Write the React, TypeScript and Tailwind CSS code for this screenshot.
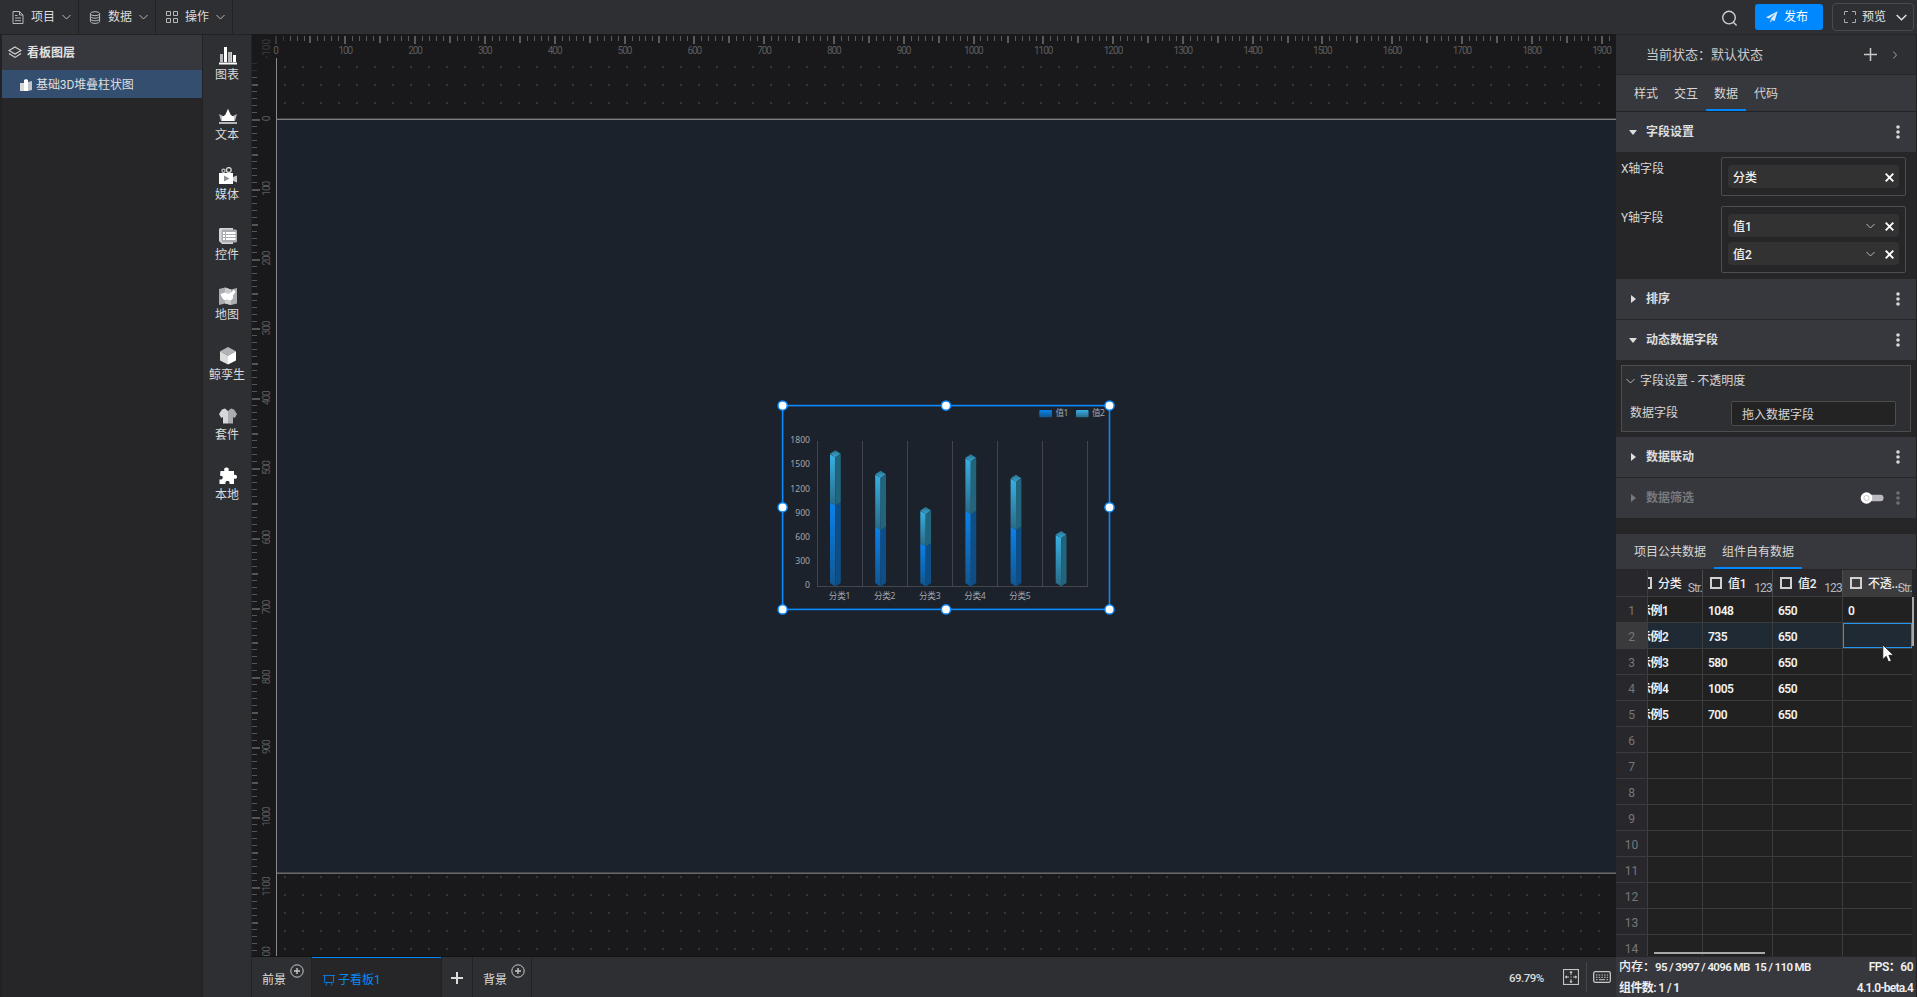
import type { ReactNode } from 'react';
import clsx from 'clsx';

const SCALE = 0.6979;

const range = (n: number) => Array.from({ length: n }, (_, i) => i);

function Chevron({ className = '' }: { className?: string }) {
  return (
    <svg width="9" height="6" viewBox="0 0 9 6" className={clsx('shrink-0', className)}>
      <path d="M0.5 1 L4.5 5 L8.5 1" fill="none" stroke="currentColor" strokeWidth="1" />
    </svg>
  );
}

function Plus({ size, stroke = 1.5 }: { size: number; stroke?: number }) {
  return (
    <svg width={size} height={size} viewBox={`0 0 ${size} ${size}`} className="shrink-0">
      <path
        d={`M${size / 2} 0V${size}M0 ${size / 2}H${size}`}
        stroke="currentColor"
        strokeWidth={stroke}
      />
    </svg>
  );
}

function Dots({ className = 'text-[#d8d8d8]' }: { className?: string }) {
  return (
    <svg width="4" height="14" viewBox="0 0 4 14" className={clsx('-mt-px', className)} fill="currentColor">
      <circle cx="2" cy="2" r="1.8" />
      <circle cx="2" cy="7" r="1.8" />
      <circle cx="2" cy="12" r="1.8" />
    </svg>
  );
}

/* ---------- top bar ---------- */

const menus: { label: string; icon: ReactNode }[] = [
  {
    label: '项目',
    icon: (
      <svg width="12" height="13" viewBox="0 0 12 13" fill="none" stroke="currentColor">
        <path d="M1 .5H7.5L11 4V12.5H1Z M7.5 .5V4H11 M3 4.5H5.5 M3 7H9 M3 9.7H9" />
      </svg>
    ),
  },
  {
    label: '数据',
    icon: (
      <svg width="12" height="13" viewBox="0 0 12 13" fill="none" stroke="currentColor">
        <ellipse cx="6" cy="2.7" rx="4.6" ry="2" />
        <path d="M1.4 2.7V10.3C1.4 11.4 3.4 12.4 6 12.4S10.6 11.4 10.6 10.3V2.7 M1.4 5.2C1.4 6.3 3.4 7.2 6 7.2S10.6 6.3 10.6 5.2 M1.4 7.8C1.4 8.9 3.4 9.8 6 9.8S10.6 8.9 10.6 7.8" />
      </svg>
    ),
  },
  {
    label: '操作',
    icon: (
      <svg width="12" height="12" viewBox="0 0 12 12" fill="none" stroke="currentColor">
        <path d="M.5 .5H4.5V4.5H.5Z M7.5 .5H11.5V4.5H7.5Z M.5 7.5H4.5V11.5H.5Z M7.5 7.5H11.5V11.5H7.5Z" />
      </svg>
    ),
  },
];

function TopBar() {
  return (
    <header className="flex h-[34px] shrink-0 items-stretch bg-[#2e2f33]">
      {menus.map((m, i) => (
        <div
          key={m.label}
          className={clsx(
            'flex items-center border-r border-[#222224]',
            i === 0 ? 'w-[79px] pl-[12px]' : 'w-[77px] pl-[10px]',
          )}
        >
          <span className="w-[12px] text-[#b9b9ba]">{m.icon}</span>
          <span className="ml-[7px] text-[#dcdcdc]">{m.label}</span>
          <Chevron className="ml-[7px] text-[#b9b9ba]" />
        </div>
      ))}
      <div className="ml-auto flex items-center pr-[3px]">
        <svg width="17" height="17" viewBox="0 0 17 17" fill="none" stroke="#d0d0d0" strokeWidth="1.4" className="mt-[2px] mr-[17px]">
          <circle cx="8" cy="7.6" r="6.3" />
          <path d="M12.3 12.3L15.6 15.4" />
        </svg>
        <button className="flex h-[26px] w-[68px] items-center rounded-[3px] bg-[#0088ff] pl-[11px] text-white">
          <svg width="12" height="12" viewBox="0 0 12 12" fill="#d9ebff">
            <path d="M11.6 .2L0 6.2L3 7.6L9.4 2.6L4.4 8.2L8.6 10.2Z M4.4 8.9V11.6L6.2 9.8Z" />
          </svg>
          <span className="ml-[6px]">发布</span>
        </button>
        <button className="ml-[9px] flex h-[28px] w-[82px] items-center rounded-[4px] border border-[#4a4b4f] pl-[11px] text-[#e4e4e4]">
          <svg width="12" height="12" viewBox="0 0 12 12" fill="none" stroke="#a9a9ab">
            <path d="M.5 4V.5H4 M8 .5H11.5V4 M11.5 8V11.5H8 M4 11.5H.5V8" />
          </svg>
          <span className="ml-[6px]">预览</span>
          <svg width="11" height="7" viewBox="0 0 11 7" className="ml-[10px]">
            <path d="M.7 1L5.5 5.7L10.3 1" fill="none" stroke="#e0e0e0" strokeWidth="1.5" />
          </svg>
        </button>
      </div>
    </header>
  );
}

/* ---------- left side ---------- */

function LayerPanel() {
  return (
    <aside className="ml-[2px] w-[200px] shrink-0 bg-[#262628]">
      <div className="flex h-[35px] items-center bg-[#37383e] pl-[6px] text-[#e2e2e2]">
        <svg width="14" height="13" viewBox="0 0 14 13" fill="none" stroke="#d2d2d2" strokeWidth="1.2">
          <path d="M7 .9L13 4.5L7 8.1L1 4.5Z M1 7.6L7 11.4L13 7.6" />
        </svg>
        <span className="ml-[5px] font-bold">看板图层</span>
      </div>
      <div className="flex h-[28px] items-center bg-[#344e70] pt-[2px] pl-[18px] text-[#dedede]">
        <svg width="12" height="12" viewBox="0 0 12 12">
          <path d="M0 4H4V12H0Z" fill="#d8d8d8" />
          <path d="M4 1L6 0L8 1V12H4Z" fill="#fff" />
          <path d="M8 3L12 2V11L8 12Z" fill="#c3c5c8" />
        </svg>
        <span className="ml-1 tracking-[-0.1px]">基础3D堆叠柱状图</span>
      </div>
    </aside>
  );
}

const tools: { label: string; icon: ReactNode }[] = [
  {
    label: '图表',
    icon: (
      <>
        <path d="M0 15.5H18V17.5H0Z" fill="#fff" />
        <path d="M1 7H4V15H1Z M9 5H12V15H9Z" fill="#b4b6b8" />
        <path d="M5 0H8V15H5Z M14 8H17V15H14Z" fill="#fff" />
        <path d="M12 5H13V15H12Z" fill="#d5d5d5" />
      </>
    ),
  },
  {
    label: '文本',
    icon: (
      <>
        <path d="M0 7L4 9L14 9L18 7L16 14H2Z" fill="#b9bbbd" />
        <path d="M9 1.8L11.5 7.5Q13 9.5 15 9.5V14H3V9.5Q5 9.5 6.5 7.5Z" fill="#fff" />
        <path d="M0 15H18V17H0Z" fill="#b4b6b8" />
      </>
    ),
  },
  {
    label: '媒体',
    icon: (
      <>
        <circle cx="9.8" cy="3" r="2.4" fill="none" stroke="#d5d5d5" strokeWidth="1.4" />
        <circle cx="4.5" cy="3.8" r="1.6" fill="none" stroke="#c5c5c5" strokeWidth="1.2" />
        <path d="M0 6H14V17H0Z" fill="#fff" />
        <path d="M14 10L18 8.5V15.5L14 14Z" fill="#c8c9ca" />
        <path d="M5 8.5L10.5 11.5L5 14.5Z" fill="#909396" />
      </>
    ),
  },
  {
    label: '控件',
    icon: (
      <>
        <path d="M1 1H14V17H3L0 14V2Z" fill="#d6d6d6" />
        <rect x="2.5" y="2.5" width="15.5" height="13" rx="1.5" fill="#a9adaf" />
        <path d="M4 5H6V7H4Z M4 8H6V10H4Z M4 11H6V13H4Z M7 5H16.5V7H7Z M7 8H16.5V10H7Z M7 11H16.5V13H7Z" fill="#fff" />
      </>
    ),
  },
  {
    label: '地图',
    icon: (
      <>
        <path d="M0 2L6 .5L12 2.5L18 1V16.5L12 18L6 16.5L0 18Z" fill="#a9adaf" />
        <path d="M6 .5L12 2.5V18L6 16.5Z" fill="#c9cbcc" />
        <path d="M1.5 7L6 5.5L9 7L12 5.5L15 2.5L16.5 5L14 8.5V11.5L11.5 13.5L8.5 12.5L5 13L3 10.5Z" fill="#fff" />
      </>
    ),
  },
  {
    label: '鲸孪生',
    icon: (
      <>
        <path d="M9 0L17 4.3L9 8.7L1 4.3Z" fill="#b0b4b6" />
        <path d="M1 4.3L9 8.7V17.5L1 13.5Z" fill="#dcdcdc" />
        <path d="M9 8.7L17 4.3V13.5L9 17.5Z" fill="#fff" />
      </>
    ),
  },
  {
    label: '套件',
    icon: (
      <>
        <path d="M6 1.5L9 4V16.5H4V10L2.2 11L0 7L3 2.5Z" fill="#d6d7d8" />
        <path d="M12 1.5L9 4V16.5H14V10L15.8 11L18 7L15 2.5Z" fill="#a9adaf" />
      </>
    ),
  },
  {
    label: '本地',
    icon: (
      <path
        d="M1.5 4H5.5C4.5 1.5 6 .5 7.5 .5S10.5 1.5 9.5 4H15V8C17 7.3 18 8.5 18 10S17 12.3 15 11.5V17H10.5C11 14.5 9.8 14 8.5 14S6 14.5 6.5 17H.5V12.5C3 13 3.8 11.5 3.8 10.5S3 8.2 1 8.8Z"
        fill="#fff"
      />
    ),
  },
];

function ToolColumn() {
  return (
    <nav className="ml-px flex w-[48px] shrink-0 flex-col bg-[#2e2f33] pt-3">
      {tools.map((t) => (
        <div key={t.label} className="flex h-[60px] flex-col items-center text-[#dadada]">
          <svg width="18" height="18" viewBox="0 0 18 18" className="ml-[2px]">
            {t.icon}
          </svg>
          <span className="mt-px h-[18px] leading-[18px] whitespace-nowrap">{t.label}</span>
        </div>
      ))}
    </nav>
  );
}

/* ---------- canvas ---------- */

function Rulers() {
  const tickLen = (i: number) => (i % 10 === 0 ? 8 : i % 5 === 0 ? 7 : 5);
  const tickWidth = (i: number) => (i % 5 === 0 ? 2 : 1);
  return (
    <svg width="1364" height="922" viewBox="252 34 1364 922" className="block" shapeRendering="crispEdges">
      <defs>
        <pattern id="dots" x="284" y="66" width="18" height="18" patternUnits="userSpaceOnUse">
          <rect width="2" height="2" fill="#343537" />
        </pattern>
      </defs>
      <rect x="277" y="58" width="1339" height="898" fill="url(#dots)" />
      <rect x="277" y="119" width="1339" height="754" fill="#1c222c" />
      <rect x="277" y="118" width="1339" height="1" fill="#3e4043" />
      <rect x="277" y="119" width="1339" height="1" fill="#7b7c7d" />
      <rect x="277" y="872" width="1339" height="1" fill="#454749" />
      <rect x="277" y="873" width="1339" height="1" fill="#68696a" />
      <rect x="276" y="58" width="1" height="898" fill="#87888a" />
      {range(193).map((i) => (
        <rect
          key={i}
          x={Math.round(275.6 + i * 10 * SCALE) - (i % 5 === 0 ? 1 : 0)}
          y="36"
          width={tickWidth(i)}
          height={tickLen(i)}
          fill={i < 2 ? '#39393a' : '#5a5a5b'}
        />
      ))}
      {range(128).map((n) => {
        const i = n - 8;
        return (
          <rect
            key={i}
            x="252"
            y={Math.round(119 + i * 10 * SCALE)}
            width={i % 5 === 0 && i % 10 !== 0 ? 6 : i % 10 === 0 ? 8 : 5}
            height={tickWidth(i)}
            fill={i < -6 ? '#2e2e2f' : '#565657'}
          />
        );
      })}
      <g fill="#5c5c5d" fontSize="10" textAnchor="middle">
        {range(20).map((i) => (
          <text key={i} x={276 + i * 100 * SCALE} y="54" textLength={i ? String(i * 100).length * 4.9 : undefined}>
            {i * 100}
          </text>
        ))}
        {range(14).map((n) => {
          const v = (n - 1) * 100;
          const y = 118.5 + v * SCALE;
          return (
            <text
              key={v}
              transform={`translate(270 ${y}) rotate(-90)`}
              opacity={v < 0 ? 0.5 : 1}
              textLength={v ? String(v).length * 4.9 : undefined}
            >
              {v}
            </text>
          );
        })}
      </g>
    </svg>
  );
}

interface Bar {
  x: number;
  top: number;
  join: number;
}

const bars: Bar[] = [
  { x: 60, top: 55.3, join: 107.3 },
  { x: 105.2, top: 75.7, join: 131.7 },
  { x: 150.3, top: 112, join: 148.3 },
  { x: 195.4, top: 59.3, join: 115.7 },
  { x: 240.6, top: 79.7, join: 131.7 },
  { x: 285.7, top: 136, join: 188 },
];

function BarShape({ x, top, join }: Bar) {
  const mid = x + 5.4;
  const right = x + 10.8;
  const base = 188;
  return (
    <g>
      {join < base && (
        <>
          <path d={`M${x} ${join}L${mid} ${join + 3}V${base + 3.5}L${x} ${base}Z`} fill="url(#blue)" />
          <path d={`M${right} ${join}L${mid} ${join + 3}V${base + 3.5}L${right} ${base}Z`} fill="#0e4d85" />
        </>
      )}
      <path d={`M${x} ${top + 4}L${mid} ${top + 7}V${join + 3.3}L${x} ${join}Z`} fill="url(#cyan)" />
      <path d={`M${right} ${top + 4}L${mid} ${top + 7}V${join + 3.3}L${right} ${join}Z`} fill="#22647b" />
      <path d={`M${mid} ${top}L${right} ${top + 3.5}L${mid} ${top + 7}L${x} ${top + 3.5}Z`} fill="url(#cap)" />
    </g>
  );
}

const handles = [
  [12.6, 10.6],
  [176, 10.6],
  [339.5, 10.6],
  [12.6, 112.3],
  [339.5, 112.3],
  [12.6, 214.4],
  [176, 214.4],
  [339.5, 214.4],
];

function StackedChart() {
  return (
    <svg width="350" height="225" viewBox="0 0 350 225" className="absolute top-[361px] left-[518px]">
      <defs>
        <linearGradient id="cyan" x1="0" y1="0" x2="0" y2="1">
          <stop offset="0" stopColor="#38b0e4" />
          <stop offset="1" stopColor="#296a86" />
        </linearGradient>
        <linearGradient id="blue" x1="0" y1="0" x2="0" y2="1">
          <stop offset="0" stopColor="#0b82ec" />
          <stop offset="1" stopColor="#11568f" />
        </linearGradient>
        <linearGradient id="cap" x1="0" y1="0" x2="0" y2="1">
          <stop offset="0" stopColor="#28708c" />
          <stop offset="1" stopColor="#36a6d4" />
        </linearGradient>
      </defs>
      <g stroke="#41454c" strokeWidth="1" shapeRendering="crispEdges">
        {range(7).map((i) => (
          <path key={i} d={`M${47.5 + i * 45} 46V191`} />
        ))}
        <path d="M47 191.5H318" />
      </g>
      {bars.map((b) => (
        <BarShape key={b.x} {...b} />
      ))}
      <g fill="#a2a6ad" fontSize="8.6" className="font-['Noto_Sans','Noto_Sans_CJK_SC',sans-serif]">
        {range(7).map((i) => (
          <text key={i} x="40" y={193.4 - i * 24.2} textAnchor="end">
            {i * 300}
          </text>
        ))}
        {range(5).map((i) => (
          <text key={i} x={69.6 + i * 45.1} y="204.2" textAnchor="middle" textLength="21.5">
            分类{i + 1}
          </text>
        ))}
        <text x="285.5" y="21" textLength="13">值1</text>
        <text x="322" y="21" textLength="13">值2</text>
      </g>
      <rect x="269.3" y="15" width="12.7" height="7.2" rx="1" fill="url(#blue)" />
      <rect x="306" y="15" width="12.5" height="7.2" rx="1" fill="url(#cyan)" />
      <rect x="12.6" y="10.6" width="326.9" height="203.8" fill="none" stroke="#0a8aff" strokeWidth="1.6" />
      {handles.map(([x, y]) => (
        <circle key={`${x}-${y}`} cx={x} cy={y} r="4.6" fill="#fff" stroke="#0a8aff" strokeWidth="1.4" />
      ))}
    </svg>
  );
}

function AddCircle() {
  return (
    <svg width="14" height="14" viewBox="0 0 14 14" fill="none" stroke="#c8c8c8" className="mb-[15px] ml-1 shrink-0">
      <circle cx="7" cy="7" r="6.2" />
      <path d="M7 4V10M4 7H10" strokeWidth="1.4" />
    </svg>
  );
}

function BoardTabs() {
  return (
    <div className="flex h-[40px] items-stretch bg-[#2e2f33] text-[#dcdcdc]">
      <div className="flex w-[60px] items-center border-r border-[#222224] pt-[3px] pl-[10px]">
        <span className="pt-[2px]">前景</span>
        <AddCircle />
      </div>
      <div className="flex w-[129px] items-center border-t border-[#0088ff] bg-[#262628] pt-[4px] pl-[11px] text-[#0a88f8]">
        <svg width="12" height="12" viewBox="0 0 12 12" fill="none" stroke="#0a78da">
          <path d="M0 1.5H12M1.5 1.5V8.5H10.5V1.5M4 8.5L3 11.5M8 8.5L9 11.5" />
        </svg>
        <span className="ml-[3px] pt-px">子看板1</span>
      </div>
      <div className="flex w-[32px] items-center justify-center border-x border-[#222224] pt-[2px]">
        <Plus size={12} stroke={2} />
      </div>
      <div className="flex w-[59px] items-center border-r border-[#222224] pt-[3px] pl-[10px]">
        <span className="pt-[2px]">背景</span>
        <AddCircle />
      </div>
      <div className="ml-auto flex items-center">
        <span className="w-[36px] pt-px text-[11.5px] font-medium tracking-[-0.5px]">69.79%</span>
        <svg width="16" height="16" viewBox="0 0 16 16" fill="none" stroke="#c4c4c4" className="ml-[18px]">
          <rect x=".5" y=".5" width="15" height="15" strokeWidth="1.2" />
          <path d="M8 2V6M8 10V14M2 8H6M10 8H14" />
          <path d="M6.3 4L8 2L9.7 4M6.3 12L8 14L9.7 12M4 6.3L2 8L4 9.7M12 6.3L14 8L12 9.7" fill="#c4c4c4" stroke="none" />
          <path d="M7.5 8H8.5" />
        </svg>
        <span className="ml-[7px] h-[30px] w-px bg-[#434448]" />
        <svg width="18" height="12" viewBox="0 0 18 12" fill="none" stroke="#c8c8c8" className="mr-[5px] ml-[6px]">
          <rect x=".7" y=".7" width="16.6" height="10.6" rx="1.5" strokeWidth="1.3" />
          <path d="M3 4H15M3 6.3H15" strokeDasharray="1.5 1.2" />
          <path d="M3 8.7H4.5M6 8.7H12M13.5 8.7H15" />
        </svg>
      </div>
    </div>
  );
}

function Canvas() {
  return (
    <main className="ml-px flex w-[1364px] shrink-0 flex-col bg-[#19191b]">
      <div className="relative h-[922px]">
        <Rulers />
        <StackedChart />
      </div>
      <div className="h-px bg-[#131314]" />
      <BoardTabs />
    </main>
  );
}

/* ---------- right side ---------- */

interface SectionHeaderProps {
  title: string;
  open?: boolean;
  disabled?: boolean;
}

function SectionHeader({ title, open = false, disabled = false }: SectionHeaderProps) {
  return (
    <div className={clsx('flex h-[40px] shrink-0 items-center bg-[#37383e] pr-[16px] pl-[13px]', disabled ? 'text-[#78797d]' : 'text-[#dedede]')}>
      <svg width="8" height="8" viewBox="0 0 8 8" fill="currentColor">
        <path d={open ? 'M0 2H8L4 7Z' : 'M2 0V8L7 4Z'} />
      </svg>
      <span className="ml-[9px] flex-1 font-bold">{title}</span>
      {disabled && (
        <svg width="24" height="12" viewBox="0 0 24 12" className="mr-[12px]">
          <rect x="6" y="2.7" width="17.5" height="6.6" rx="3" fill="#b9b9bf" />
          <circle cx="6.5" cy="6" r="5.8" fill="#fff" />
          <circle cx="6.5" cy="6" r="2.6" fill="none" stroke="#c9c9c0" />
        </svg>
      )}
      <Dots className={disabled ? 'text-[#707176]' : 'text-[#d8d8d8]'} />
    </div>
  );
}

function FieldChip({ label, menu = false }: { label: string; menu?: boolean }) {
  return (
    <div className="flex h-[23px] items-center rounded-[4px] bg-[#323233] pr-[5px] pl-[5px] font-medium text-[#f0f0f0]">
      <span className="flex-1 pt-[3px]">{label}</span>
      {menu && <Chevron className="mr-[10px] text-[#b9b9ba]" />}
      <svg width="9" height="9" viewBox="0 0 9 9" className="mt-[2px]">
        <path d="M.7 .7L8.3 8.3M8.3 .7L.7 8.3" stroke="#fff" strokeWidth="1.9" />
      </svg>
    </div>
  );
}

const columns = [
  { title: '分类', type: 'Str.', width: 'w-[55px]' },
  { title: '值1', type: '123', width: 'w-[70px]' },
  { title: '值2', type: '123', width: 'w-[70px]' },
  { title: '不透...', type: 'Str.', width: 'w-[69px]' },
];

const rows = [
  ['示例1', '1048', '650', '0'],
  ['示例2', '735', '650', ''],
  ['示例3', '580', '650', ''],
  ['示例4', '1005', '650', ''],
  ['示例5', '700', '650', ''],
];

function DataTable() {
  return (
    <div className="relative h-[386px] shrink-0 overflow-hidden bg-[#262628]">
      <div className="flex h-[27px] w-[296px] border-b border-[#3e3e3e] bg-[#28282c]">
        <div className="w-[32px] shrink-0 border-r border-[#3e3e3e]" />
        {columns.map((c, i) => (
          <div
            key={c.title}
            className={clsx(
              'relative flex shrink-0 items-center overflow-hidden whitespace-nowrap text-[#f0f0f0]',
              c.width,
              i < 3 ? 'border-r border-[#4a4a4a]' : 'bg-[#3c3c3f]',
              i > 0 && 'pl-[7px]',
            )}
          >
            <span className={clsx('h-[12px] w-[12px] shrink-0 border-2 border-[#d0d0d0]', i === 0 && '-ml-[8px]')} />
            <span className="ml-[6px] pt-[2px] font-medium tracking-[-0.2px]">{c.title}</span>
            <span className="absolute right-0 bottom-0 text-[12px] leading-[16px] tracking-[-0.8px] text-[#b8b8b8]">{c.type}</span>
          </div>
        ))}
      </div>
      {range(14).map((r) => (
        <div key={r} className={clsx('flex h-[26px] w-[296px] border-b border-[#3c3c3c]', r === 1 ? 'bg-[#1f2a35]' : 'bg-[#202120]')}>
          <div
            className={clsx(
              'flex w-[32px] shrink-0 items-center justify-center border-r border-[#3e3e3e] pt-[3px] text-[#77777a]',
              r === 1 ? 'bg-[#3a3a3c]' : 'bg-[#28282c]',
            )}
          >
            {r + 1}
          </div>
          {columns.map((c, i) => (
            <div
              key={c.title}
              className={clsx(
                'flex shrink-0 items-center overflow-hidden pt-[3px] font-semibold whitespace-nowrap text-[#f2f2f2]',
                c.width,
                i < 3 && 'border-r border-[#3c3c3c]',
                i > 0 && 'pl-[5px]',
                r === 1 && i === 3 && 'border border-[#2196f3]',
              )}
            >
              <span className={clsx('tracking-[-0.5px]', i === 0 && '-ml-[9px]')}>{rows[r]?.[i]}</span>
            </div>
          ))}
        </div>
      ))}
      {/* scroll thumbs and pointer float over the grid */}
      <div className="absolute top-[27px] right-[2px] h-[49px] w-[2px] bg-[#a8a8a8]" />
      <div className="absolute bottom-[2px] left-[38px] h-[2px] w-[111px] bg-[#a8a8a8]" />
      <svg width="13" height="20" viewBox="0 0 13 20" className="absolute top-[74px] left-[266px]">
        <path d="M.8 .8V15.5L4.2 12.3L6.6 18L9.3 16.8L6.9 11.3H11.5Z" fill="#fff" stroke="#111" strokeWidth=".8" />
      </svg>
    </div>
  );
}

function Inspector() {
  return (
    <aside className="flex w-[300px] shrink-0 flex-col bg-[#262628]">
      <div className="mt-px flex h-[39px] shrink-0 items-center bg-[#2e2f33] pr-[19px] pl-[30px] text-[13px] text-[#c9c9ca]">
        <span className="flex-1 pt-px">当前状态：默认状态</span>
        <Plus size={13} />
        <svg width="4" height="8" viewBox="0 0 4 8" fill="none" stroke="#a0a0a0" className="ml-[16px]">
          <path d="M.3 .5L3.5 4L.3 7.5" />
        </svg>
      </div>
      <div className="mt-px flex h-[36px] shrink-0 bg-[#37383e] pl-[10px] text-[#d6d6d6]">
        {['样式', '交互', '数据', '代码'].map((t) => (
          <div
            key={t}
            className={clsx('flex w-[40px] items-center justify-center border-b-2 pt-[3px]', t === '数据' ? 'border-[#0088ff]' : 'border-transparent')}
          >
            {t}
          </div>
        ))}
      </div>
      <div className="h-px shrink-0 bg-[#222224]" />
      <SectionHeader title="字段设置" open />
      <div className="flex h-[127px] shrink-0 flex-col gap-[10px] pt-[5px] pr-[10px] pl-[5px] text-[#d6d6d6]">
        <div className="flex">
          <span className="w-[100px] pt-[3px] tracking-[-0.2px]">X轴字段</span>
          <div className="h-[39px] flex-1 rounded-[2px] border border-[#4d4d50] px-[6px] py-[7px]">
            <FieldChip label="分类" />
          </div>
        </div>
        <div className="flex">
          <span className="w-[100px] pt-[3px] tracking-[-0.2px]">Y轴字段</span>
          <div className="flex h-[67px] flex-1 flex-col gap-[5px] rounded-[2px] border border-[#4d4d50] px-[6px] py-[7px]">
            <FieldChip label="值1" menu />
            <FieldChip label="值2" menu />
          </div>
        </div>
      </div>
      <SectionHeader title="排序" />
      <div className="h-px shrink-0" />
      <SectionHeader title="动态数据字段" open />
      <div className="h-[77px] shrink-0 px-[5px] pt-[5px] text-[#d6d6d6]">
        <div className="h-[67px] border border-[#4d4d50] bg-[#2e2f33]">
          <div className="flex h-[30px] items-center pl-[4px]">
            <Chevron className="text-[#b9b9ba]" />
            <span className="ml-[5px]">字段设置 - 不透明度</span>
          </div>
          <div className="flex pt-[5px] pl-[8px]">
            <span className="w-[101px] pt-[3px]">数据字段</span>
            <div className="flex h-[25px] w-[165px] items-center rounded-[2px] border border-[#4d4d50] bg-[#232324] pt-[2px] pl-[10px]">
              拖入数据字段
            </div>
          </div>
        </div>
      </div>
      <SectionHeader title="数据联动" />
      <div className="h-px shrink-0" />
      <SectionHeader title="数据筛选" disabled />
      <div className="h-[16px] shrink-0" />
      <div className="mb-px flex h-[35px] shrink-0 bg-[#37383e] pl-[10px] text-[#d6d6d6]">
        {['项目公共数据', '组件自有数据'].map((t, i) => (
          <div
            key={t}
            className={clsx('flex w-[88px] items-center justify-center border-b-2 pt-[2px]', i === 1 ? 'border-[#0088ff]' : 'border-transparent')}
          >
            {t}
          </div>
        ))}
      </div>
      <DataTable />
      <div className="mt-auto flex h-[40px] shrink-0 flex-col bg-[#37383e] pr-[3px] pl-[3px] font-semibold whitespace-nowrap text-[#efefef]">
        <div className="flex h-[20px] items-center">
          <span className="w-[36px] font-medium">内存：</span>
          <span className="text-[11.5px] tracking-[-0.6px]">95 / 3997 / 4096 MB&nbsp; 15 / 110 MB</span>
          <span className="ml-auto tracking-[-0.5px]">FPS：60</span>
        </div>
        <div className="flex h-[20px] items-center justify-between pt-px">
          <span className="tracking-[-0.6px]">组件数: 1 / 1</span>
          <span className="tracking-[-0.8px]">4.1.0-beta.4</span>
        </div>
      </div>
    </aside>
  );
}

export default function App() {
  return (
    <div className="flex h-[997px] w-[1917px] flex-col overflow-hidden bg-[#222224] font-['Roboto','Noto_Sans_CJK_SC',sans-serif] text-[12px] leading-[18px]">
      <TopBar />
      <div className="flex min-h-0 flex-1">
        <div className="flex pt-px">
          <LayerPanel />
          <ToolColumn />
        </div>
        <Canvas />
        <Inspector />
      </div>
    </div>
  );
}
